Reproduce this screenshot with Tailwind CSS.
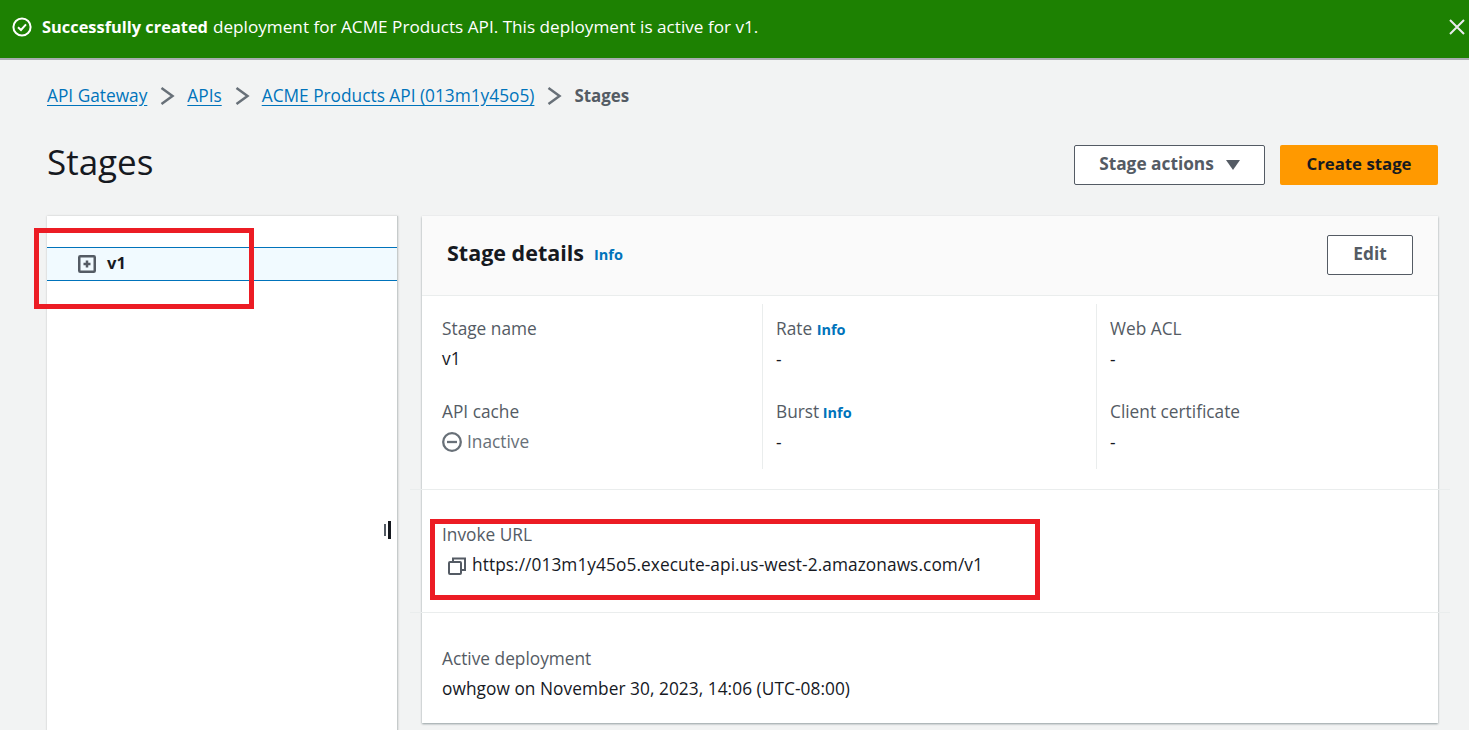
<!DOCTYPE html>
<html><head><meta charset="utf-8">
<script src="https://cdn.jsdelivr.net/npm/@tailwindcss/browser@4"></script>
</head>
<body class="m-0">
<div class="relative w-[1469px] h-[730px] overflow-hidden bg-[#f2f3f3] font-['Open_Sans',sans-serif] text-[17.3px] leading-[22px] text-[#16191f]">
  <div class="h-[60px] bg-[#1d8102] border-b-2 border-[#a9adb1] flex items-center pl-[12px] pr-[3px] pb-[5px] text-white">
    <svg class="w-5 h-5 mr-[10px]" viewBox="0 0 20 20" fill="none" stroke="white" stroke-width="2"><circle cx="10" cy="10" r="8.6"/><path d="M6 10.2l3 2.8 5-5.6"/></svg>
    <span class="font-bold text-[16.4px]">Successfully created</span><span class="ml-[5px] text-[17.17px]">deployment for ACME Products API. This deployment is active for v1.</span>
    <svg class="ml-auto w-[18px] h-[18px]" viewBox="0 0 18 18" fill="none" stroke="#e9ebed" stroke-width="2"><path d="M2 2l14 14M16 2L2 16"/></svg>
  </div>
  <div class="pl-[47px] pr-[31px]">
    <nav class="h-[26px] mt-[23px] flex items-center text-[#0073bb]">
      <a class="underline underline-offset-[3px]">API Gateway</a>
      <svg class="w-4 h-5 mx-[12px]" viewBox="0 0 16 20" fill="none" stroke="#687078" stroke-width="2.5"><path d="M2.5 2l11 8-11 8"/></svg>
      <a class="underline underline-offset-[3px]">APIs</a>
      <svg class="w-4 h-5 mx-[12px]" viewBox="0 0 16 20" fill="none" stroke="#687078" stroke-width="2.5"><path d="M2.5 2l11 8-11 8"/></svg>
      <a class="underline underline-offset-[3px]">ACME Products API (013m1y45o5)</a>
      <svg class="w-4 h-5 mx-[12px]" viewBox="0 0 16 20" fill="none" stroke="#687078" stroke-width="2.5"><path d="M2.5 2l11 8-11 8"/></svg>
      <span class="font-bold text-[16.9px] text-[#545b64]">Stages</span>
    </nav>
    <div class="mt-[36px] h-[40px] flex items-center justify-between">
      <h1 class="text-[35px] leading-[40px] font-normal mb-[6px]">Stages</h1>
      <div class="flex gap-[15px]">
        <button class="w-[191px] h-[40px] pb-[2px] bg-white border border-[#545b64] rounded-[2px] font-bold text-[#545b64] flex items-center justify-center gap-[12px]">Stage actions
          <svg class="w-[14px] h-[10px] mt-[2px]" viewBox="0 0 14 10"><path d="M0 0h14L7 10z" fill="#545b64"/></svg>
        </button>
        <button class="w-[158px] h-[40px] pb-[2px] bg-[#ff9900] rounded-[2px] font-bold text-[16.8px] text-[#16191f]">Create stage</button>
      </div>
    </div>
    <div class="mt-[31px] flex gap-[24px] items-start">
      <aside class="w-[351px] h-[520px] bg-white border-r border-[#c6cbcb] shadow-[0_0_2px_rgba(0,0,0,0.2)] pt-[31px]">
        <div class="h-[34px] bg-[#f1faff] border-y border-[#0073bb] flex items-center pl-[31px] gap-[11px]">
          <svg class="w-[18px] h-[18px]" viewBox="0 0 18 18" fill="none" stroke="#545b64" stroke-width="2.5"><rect x="1.25" y="1.25" width="15.5" height="15.5" rx="1"/><path d="M9 5.5v7M5.5 9h7"/></svg>
          <span class="font-bold text-[16.5px] mb-[2px]">v1</span>
        </div>
      </aside>
      <section class="w-[1016px] h-[507px] bg-white shadow-[0_1px_2px_rgba(0,28,36,0.4)] relative">
        <header class="h-[80px] bg-[#fafafa] border-b border-[#eaeded] flex items-center pl-[25px] pr-[25px]">
          <h2 class="text-[21.5px] font-bold mb-[5px]">Stage details</h2>
          <span class="ml-[10px] text-[14.5px] font-bold text-[#0073bb] mb-[1px]">Info</span>
          <button class="ml-auto w-[86px] h-[40px] mb-[1px] pb-[2px] border border-[#545b64] bg-white rounded-[2px] font-bold text-[#545b64]">Edit</button>
        </header>
        <div class="pl-[20px] pt-0 mt-[8px] grid grid-cols-[321px_334px_1fr] h-[165px]">
          <div class="h-[165px] border-r border-[#eaeded] flex flex-col">
            <div class="mt-[14px] text-[#545b64]">Stage name</div>
            <div class="mt-[8px]">v1</div>
            <div class="mt-[31px] text-[#545b64]">API cache</div>
            <div class="mt-[8px] flex items-center gap-[5px] text-[#687078]">
              <svg class="w-5 h-5" viewBox="0 0 20 20" fill="none" stroke="#687078" stroke-width="2.3"><circle cx="10" cy="10" r="8.8"/><path d="M5 10h10"/></svg>Inactive
            </div>
          </div>
          <div class="h-[165px] border-r border-[#eaeded] pl-[13px] flex flex-col">
            <div class="mt-[14px] text-[#545b64]">Rate <span class="text-[14.5px] leading-none font-bold text-[#0073bb]">Info</span></div>
            <div class="mt-[9px]">-</div>
            <div class="mt-[30px] text-[#545b64]">Burst <span class="-ml-[1px] text-[14.5px] leading-none font-bold text-[#0073bb]">Info</span></div>
            <div class="mt-[9px]">-</div>
          </div>
          <div class="h-[165px] pl-[13px] flex flex-col">
            <div class="mt-[14px] text-[#545b64]">Web ACL</div>
            <div class="mt-[9px]">-</div>
            <div class="mt-[30px] text-[#545b64]">Client certificate</div>
            <div class="mt-[9px]">-</div>
          </div>
        </div>
        <div class="mt-[20px] border-t border-[#eaeded] h-[123px] pt-[34px] -mx-[12px] pl-[32px]">
          <div class="text-[#545b64]">Invoke URL</div>
          <div class="mt-[8px] flex items-center gap-[6px] pl-[6px]">
            <svg class="w-[18px] h-[18px] mt-[2px]" viewBox="0 0 18 18" fill="none" stroke="#545b64" stroke-width="2"><rect x="1" y="5" width="12" height="12" rx="1"/><path d="M5 5V1.5h12V13h-4"/></svg>
            <span class="tracking-[0.07px]">https://013m1y45o5.execute-api.us-west-2.amazonaws.com/v1</span>
          </div>
        </div>
        <div class="border-t border-[#eaeded] pt-[35px] -mx-[12px] pl-[32px]">
          <div class="text-[#545b64]">Active deployment</div>
          <div class="mt-[8px] tracking-[0.05px]">owhgow on November 30, 2023, 14:06 (UTC-08:00)</div>
        </div>
      </section>
    </div>
  </div>
  <div class="absolute left-[384px] top-[521px] h-[18px] flex items-center gap-[2px]"><i class="block w-[2px] h-[12px] bg-[#545b64]"></i><i class="block w-[3px] h-[18px] bg-[#16191f]"></i></div>
  <div class="absolute left-[34px] top-[228px] w-[220px] h-[81px] border-[5px] border-[#ec1c24]"></div>
  <div class="absolute left-[430px] top-[519px] w-[610px] h-[81px] border-[5px] border-[#ec1c24]"></div>
</div>
</body></html>
